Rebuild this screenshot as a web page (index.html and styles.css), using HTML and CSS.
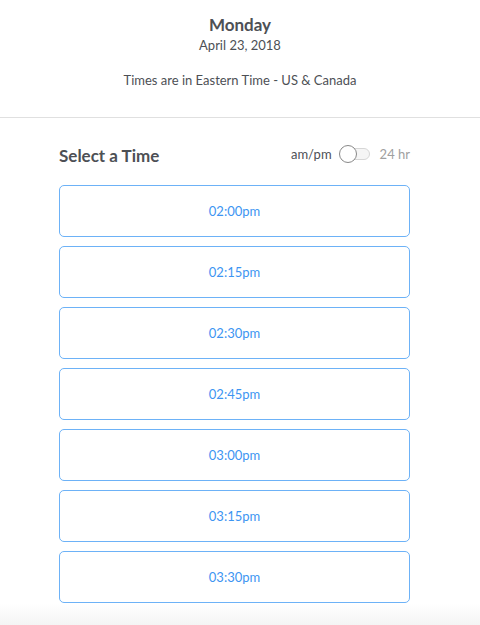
FILE: index.html
```html
<!DOCTYPE html>
<html>
<head>
<meta charset="utf-8">
<link rel="stylesheet" href="styles.css">
</head>
<body>
<div class="page">
  <header class="day-header">
    <div class="day-name">Monday</div>
    <div class="day-date">April 23, 2018</div>
    <div class="tz">Times are in Eastern Time - US &amp; Canada</div>
  </header>
  <section class="times">
    <div class="times-head">
      <h2 class="times-title">Select a Time</h2>
      <div class="format">
        <span class="fmt-on">am/pm</span>
        <span class="switch"><span class="knob"></span></span>
        <span class="fmt-off">24 hr</span>
      </div>
    </div>
    <div class="slot-list">
      <button class="slot">02:00pm</button>
      <button class="slot">02:15pm</button>
      <button class="slot">02:30pm</button>
      <button class="slot">02:45pm</button>
      <button class="slot">03:00pm</button>
      <button class="slot">03:15pm</button>
      <button class="slot">03:30pm</button>
    </div>
  </section>
  <div class="fade"></div>
</div>
</body>
</html>
```

FILE: styles.css
```css
* { box-sizing: border-box; }
html, body { margin: 0; padding: 0; }
body {
  font-family: "Lato", "Liberation Sans", sans-serif;
  color: #4d5055;
  background: #fff;
  width: 480px;
  height: 625px;
  overflow: hidden;
}
.page {
  display: flex;
  flex-direction: column;
  height: 625px;
}
.day-header {
  display: flex;
  flex-direction: column;
  align-items: center;
  padding-top: 15px;
  height: 119px;
  border-bottom: 1px solid #e0e0e0;
}
.day-name {
  font-size: 17px;
  font-weight: 700;
  line-height: 20px;
}
.day-date {
  font-size: 13px;
  line-height: 16px;
  margin-top: 2px;
}
.tz {
  font-size: 13px;
  line-height: 16px;
  margin-top: 19px;
}
.times {
  padding: 25px 70px 0 59px;
}
.times-head {
  display: flex;
  justify-content: space-between;
  align-items: center;
  height: 24px;
  margin-bottom: 18px;
}
.times-title {
  margin: 0;
  font-size: 17px;
  font-weight: 700;
  color: #4d5055;
}
.format {
  display: flex;
  align-items: center;
  gap: 8px;
  font-size: 13px;
  margin-top: -3px;
}
.fmt-on { color: #4d5055; }
.fmt-off { color: #a0a0a0; margin-left: 2px; }
.switch {
  position: relative;
  width: 30px;
  height: 12px;
  border: 1px solid #d6d6d6;
  border-radius: 6px;
  background: #f5f5f5;
}
.knob {
  position: absolute;
  left: -2px;
  top: -4px;
  width: 18px;
  height: 18px;
  border-radius: 50%;
  border: 1px solid #888;
  background: #fff;
}
.slot-list {
  display: flex;
  flex-direction: column;
  gap: 9px;
}
.slot {
  height: 52px;
  width: 100%;
  border: 1.5px solid #6db2f7;
  border-radius: 5px;
  background: #fff;
  color: #3d95f2;
  font-family: inherit;
  font-size: 13px;
  padding: 0;
}
.fade {
  margin-top: auto;
  height: 22px;
  background: linear-gradient(#fff, #f4f4f4);
}
```
